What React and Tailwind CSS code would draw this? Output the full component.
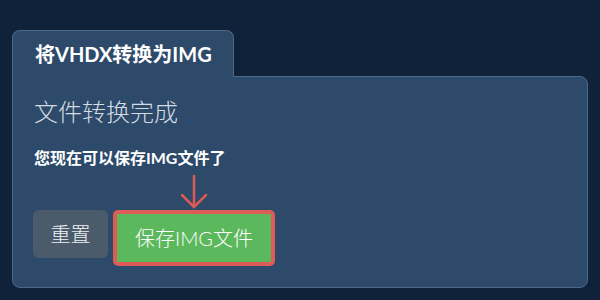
export default function App() {
  const font = { fontFamily: 'Lato, "Noto Sans CJK SC", sans-serif' };
  return (
    <div className="w-[600px] h-[300px] bg-[#10223a] pt-[30px] px-[12px]" style={font}>
      <div className="relative z-10 -mb-px inline-flex h-[47px] items-center rounded-t-lg border border-b-0 border-[#4c6887] bg-[#2d4a6a] pl-[22px] pr-[21px]">
        <span className="text-[20px] font-bold text-white leading-none">将VHDX转换为IMG</span>
      </div>
      <div className="h-[212px] rounded-b-lg rounded-tr-lg border border-[#4c6887] bg-[#2d4a6a] pl-[21px] pt-[20px]">
        <div className="text-[24px] font-light text-[#d4dbe3] leading-[30px]">文件转换完成</div>
        <div className="mt-[20px] text-[16px] font-bold text-white leading-[22px]">您现在可以保存IMG文件了</div>
        <div className="ml-[145px] mt-[4px] h-[36px] w-[30px]">
          <svg width="30" height="36" viewBox="0 0 30 36" fill="none" stroke="#dd5b55" strokeWidth="2.5" strokeLinecap="round">
            <line x1="15" y1="3" x2="15" y2="34" />
            <polyline points="3,22 15,34 27,22" />
          </svg>
        </div>
        <div className="mt-[1px] flex items-start gap-[5px] -ml-[1px]">
          <button className="h-[48px] w-[75px] rounded-md bg-[#4b5b6c] text-[20px] font-light text-[#eef1f4]">重置</button>
          <div className="rounded-[5px] border-[4px] border-[#de5c58]">
            <button className="h-[48px] w-[154px] bg-[#5cb85c] text-[20px] font-light text-white">保存IMG文件</button>
          </div>
        </div>
      </div>
    </div>
  );
}
